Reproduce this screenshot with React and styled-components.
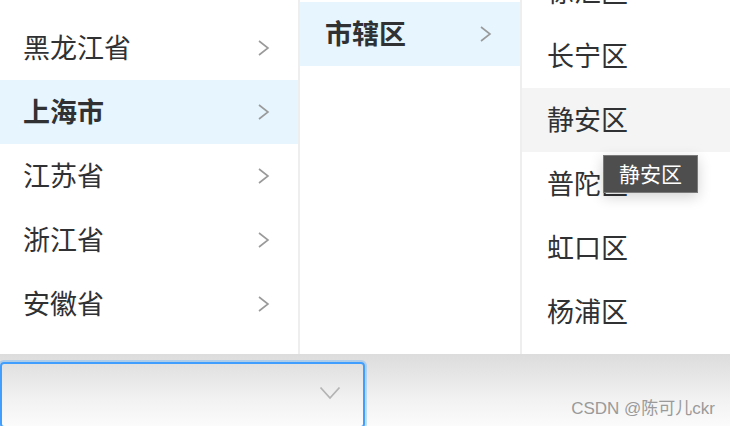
import React from "react";
import styled, { createGlobalStyle } from "styled-components";

const GlobalStyle = createGlobalStyle`
  html, body {
    margin: 0;
    padding: 0;
    background: #ffffff;
    font-family: "Noto Sans CJK SC", "Noto Sans", sans-serif;
  }
`;

const Page = styled.div`
  width: 730px;
  height: 426px;
  overflow: hidden;
  position: relative;
  display: flex;
  flex-direction: column;
  background: linear-gradient(#ffffff 0, #ffffff 354px, #dcdcdc 354px, #f2f2f2 400px, #fbfbfb 426px);
`;

const Panel = styled.div`
  display: flex;
  height: 354px;
  background: #fff;
  flex-shrink: 0;
`;

const Column = styled.div`
  width: ${p => p.width}px;
  flex-shrink: 0;
  overflow: hidden;
  border-right: ${p => (p.last ? "none" : "2px solid #eeeeee")};
  padding-top: ${p => p.offset}px;
  box-sizing: border-box;
`;

const ScrolledList = styled.div`
  margin-top: ${p => -p.scroll}px;
`;

const Row = styled.div`
  height: 64px;
  box-sizing: border-box;
  display: flex;
  align-items: center;
  justify-content: space-between;
  padding: 0 28px 4px ${p => p.indent}px;
  font-size: 27px;
  color: #303133;
  font-weight: ${p => (p.active ? 700 : 400)};
  background: ${p => (p.active ? "#e6f5fe" : p.hover ? "#f4f4f4" : "transparent")};
`;

const Chevron = () => (
  <svg width="13" height="18" viewBox="0 0 13 18" fill="none" style={{ marginTop: 4 }}>
    <polyline points="2,2 11,9 2,16" stroke="#9a9a9a" strokeWidth="1.6" />
  </svg>
);

const Tooltip = styled.div`
  position: absolute;
  left: 603px;
  top: 155px;
  width: 95px;
  height: 38px;
  box-sizing: border-box;
  padding-bottom: 2px;
  background: #4e4e4e;
  border: 1px solid #7a7a7a;
  color: #fff;
  font-size: 21px;
  display: flex;
  align-items: center;
  justify-content: center;
  box-shadow: 0 4px 14px rgba(0, 0, 0, 0.18);
`;

const Bottom = styled.div`
  flex: 1;
  display: flex;
  align-items: flex-end;
  justify-content: space-between;
  padding-top: 8px;
`;

const Select = styled.div`
  width: 365px;
  height: 66px;
  box-sizing: border-box;
  margin-bottom: -2px;
  border: 2px solid #409eff;
  border-radius: 4px;
  box-shadow: 0 0 0 2px rgba(64, 158, 255, 0.3);
  display: flex;
  align-items: center;
  justify-content: flex-end;
  padding: 0 22px 4px 0;
`;

const Watermark = styled.div`
  font-family: "Liberation Sans", "Noto Sans CJK SC", sans-serif;
  font-size: 17px;
  color: #9a9a9a;
  margin: 0 15px 7px 0;
`;

const provinces = ["黑龙江省", "上海市", "江苏省", "浙江省", "安徽省"];
const districts = ["徐汇区", "长宁区", "静安区", "普陀区", "虹口区", "杨浦区"];

export default function App() {
  return (
    <Page>
      <GlobalStyle />
      <Panel>
        <Column width={300} offset={16}>
          {provinces.map(p => (
            <Row key={p} indent={23} active={p === "上海市"}>
              <span>{p}</span>
              <Chevron />
            </Row>
          ))}
        </Column>
        <Column width={222} offset={2}>
          <Row indent={25} active>
            <span>市辖区</span>
            <Chevron />
          </Row>
        </Column>
        <Column width={208} offset={0} last>
          <ScrolledList scroll={40}>
            {districts.map(d => (
              <Row key={d} indent={25} hover={d === "静安区"}>
                <span>{d}</span>
              </Row>
            ))}
          </ScrolledList>
        </Column>
      </Panel>
      <Tooltip>静安区</Tooltip>
      <Bottom>
        <Select>
          <svg width="22" height="14" viewBox="0 0 22 14" fill="none">
            <polyline points="1.5,1.5 11,12 20.5,1.5" stroke="#b4b4b4" strokeWidth="1.8" />
          </svg>
        </Select>
        <Watermark>CSDN @陈可儿ckr</Watermark>
      </Bottom>
    </Page>
  );
}
